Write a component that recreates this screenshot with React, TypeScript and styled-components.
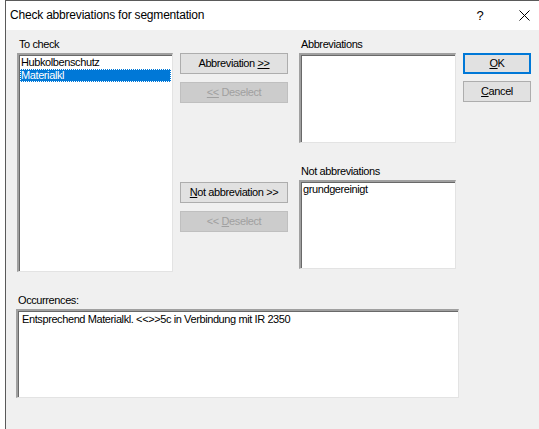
import React from 'react';
import styled, { createGlobalStyle } from 'styled-components';

const GlobalStyle = createGlobalStyle`
  html, body {
    margin: 0;
    padding: 0;
    background: #ffffff;
    width: 539px;
    height: 429px;
    overflow: hidden;
  }
`;

const Window = styled.div`
  margin-left: 5px;
  width: 541px;
  height: 429px;
  box-sizing: border-box;
  border-left: 1px solid #5a5a5a;
  border-top: 1px solid #5a5a5a;
  background: #f0f0f0;
  display: flex;
  flex-direction: column;
  font-family: 'Liberation Sans', Arial, sans-serif;
  font-size: 11px;
  letter-spacing: -0.4px;
  color: #000;
`;

const TitleBar = styled.div`
  height: 29px;
  flex: none;
  background: #ffffff;
  display: flex;
  align-items: center;
  padding-left: 4px;
`;

const Title = styled.div`
  flex: 1;
  font-size: 12px;
  letter-spacing: -0.2px;
  padding-bottom: 1px;
`;

const CaptionButton = styled.div`
  width: 44px;
  height: 29px;
  display: flex;
  align-items: center;
  justify-content: center;
  font-size: 13px;
  letter-spacing: 0;
`;

const Body = styled.div`
  display: flex;
  padding: 8px 0 0 11px;
`;

const Column = styled.div<{ $w: number; $left?: number }>`
  display: flex;
  flex-direction: column;
  flex: none;
  width: ${p => p.$w}px;
  margin-left: ${p => p.$left ?? 0}px;
`;

const Label = styled.div<{ $top?: number }>`
  height: 13px;
  line-height: 13px;
  margin-top: ${p => p.$top ?? 0}px;
  margin-bottom: 2px;
  padding-left: 2px;
  white-space: nowrap;
`;

const ListBox = styled.div<{ $h: number; $w?: number }>`
  box-sizing: border-box;
  height: ${p => p.$h}px;
  width: ${p => (p.$w ? `${p.$w}px` : '100%')};
  background: #ffffff;
  border-top: 2px solid;
  border-left: 2px solid;
  border-right: 1px solid;
  border-bottom: 1px solid;
  border-color: #a0a0a0 #e3e3e3 #e3e3e3 #a0a0a0;
  box-shadow: inset 1px 1px 0 #696969;
  padding: 1px 1px;
`;

const Item = styled.div<{ $selected?: boolean }>`
  height: 13px;
  line-height: 13px;
  padding-left: 1px;
  white-space: nowrap;
  background: ${p => (p.$selected ? '#0078d7' : 'transparent')};
  color: ${p => (p.$selected ? '#ffffff' : '#000000')};
  outline: ${p => (p.$selected ? '1px dotted #ffffff' : 'none')};
  outline-offset: -1px;
`;

const Button = styled.div<{ $disabled?: boolean; $default?: boolean; $top?: number }>`
  box-sizing: border-box;
  height: 21px;
  margin-top: ${p => p.$top ?? 0}px;
  display: flex;
  align-items: center;
  justify-content: center;
  padding-bottom: 1px;
  white-space: nowrap;
  background: ${p => (p.$disabled ? '#cccccc' : '#e1e1e1')};
  color: ${p => (p.$disabled ? '#a0a0a0' : '#000000')};
  border: ${p =>
    p.$default ? '2px solid #0078d7' : p.$disabled ? '1px solid #bfbfbf' : '1px solid #adadad'};
`;

const Key = styled.span`
  text-decoration: underline;
  text-underline-offset: 1px;
`;

const Occurrences = styled.div`
  padding: 0 0 0 10px;
  margin-top: 22px;
  display: flex;
  flex-direction: column;
`;

const OccurrenceText = styled.div`
  padding: 1px 3px;
  white-space: nowrap;
`;

const App = () => {
  return (
    <>
      <GlobalStyle />
      <Window>
        <TitleBar>
          <Title>Check abbreviations for segmentation</Title>
          <CaptionButton>?</CaptionButton>
          <CaptionButton>
            <svg width="11" height="11" viewBox="0 0 11 11">
              <path d="M0.5 0.5 L10.5 10.5 M10.5 0.5 L0.5 10.5" stroke="#000" strokeWidth="1" />
            </svg>
          </CaptionButton>
        </TitleBar>
        <Body>
          <Column $w={156}>
            <Label>To check</Label>
            <ListBox $h={219}>
              <Item>Hubkolbenschutz</Item>
              <Item $selected>Materialkl</Item>
            </ListBox>
          </Column>
          <Column $w={108} $left={7}>
            <Button $top={15}>
              Abbreviation&nbsp;<Key>&gt;&gt;</Key>
            </Button>
            <Button $disabled $top={8}>
              <Key>&lt;&lt;</Key>&nbsp;Deselect
            </Button>
            <Button $top={79}>
              <Key>N</Key>ot abbreviation &gt;&gt;
            </Button>
            <Button $disabled $top={8}>
              &lt;&lt;&nbsp;<Key>D</Key>eselect
            </Button>
          </Column>
          <Column $w={157} $left={11}>
            <Label>Abbreviations</Label>
            <ListBox $h={90} />
            <Label $top={22}>Not abbreviations</Label>
            <ListBox $h={89}>
              <Item>grundgereinigt</Item>
            </ListBox>
          </Column>
          <Column $w={68} $left={7}>
            <Button $default $top={15}>
              <Key>O</Key>K
            </Button>
            <Button $top={7}>
              <Key>C</Key>ancel
            </Button>
          </Column>
        </Body>
        <Occurrences>
          <Label>Occurrences:</Label>
          <ListBox $h={89} $w={443}>
            <OccurrenceText>Entsprechend Materialkl. &lt;&lt;&gt;&gt;5c in Verbindung mit IR 2350</OccurrenceText>
          </ListBox>
        </Occurrences>
      </Window>
    </>
  );
};

export default App;
